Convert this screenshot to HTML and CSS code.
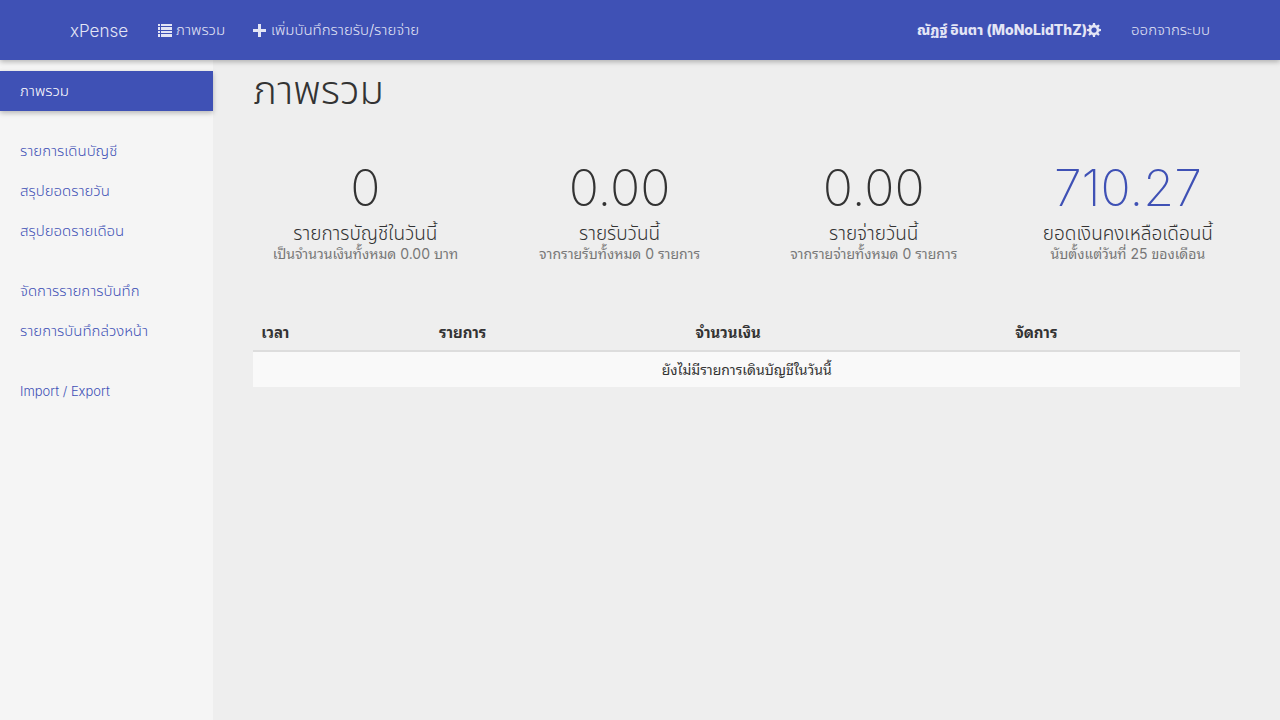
FILE: index.html
```html
<!DOCTYPE html>
<html lang="th">
<head>
<meta charset="utf-8">
<title>xPense</title>
<link rel="stylesheet" href="styles.css">
</head>
<body>
<header class="navbar">
  <a class="brand" href="#">xPense</a>
  <nav class="nav-main">
    <a href="#"><svg class="icon" viewBox="0 0 14 14" aria-hidden="true"><path d="M0 1h2v2H0zM3 1h11v2H3zM0 4h2v3H0zM3 4h11v3H3zM0 8h2v2H0zM3 8h11v2H3zM0 11h2v3H0zM3 11h11v3H3z"/></svg>ภาพรวม</a>
    <a href="#"><svg class="icon" viewBox="0 0 14 14" aria-hidden="true"><path d="M5 1h3v5h5v3H8v5H5V9H0V6h5z"/></svg>เพิ่มบันทึกรายรับ/รายจ่าย</a>
  </nav>
  <nav class="nav-user">
    <a class="user" href="#">ณัฏฐ์ อินตา (MoNoLidThZ)<svg class="icon gear" viewBox="0 0 14 14" aria-hidden="true"><path fill-rule="evenodd" d="M6 0h2l.4 2 1.3.6L11.400 1.400l1.400 1.400L11.500 4.400 12 5.800l2 .3v2l-2 .3-.6 1.400 1.300 1.600-1.400 1.400-1.700-1.200-1.300.5L8 14H6l-.4-2-1.300-.5-1.700 1.200-1.400-1.400 1.300-1.600L2 8.400l-2-.3v-2l2-.3.5-1.400L1.200 2.800l1.400-1.400 1.700 1.200L5.600 2zM7 4.400a2.700 2.700 0 1 0 .01 0z"/></svg></a>
    <a href="#">ออกจากระบบ</a>
  </nav>
</header>
<div class="layout">
  <aside class="sidebar">
    <ul><li><a class="active" href="#">ภาพรวม</a></li></ul>
    <ul>
      <li><a href="#">รายการเดินบัญชี</a></li>
      <li><a href="#">สรุปยอดรายวัน</a></li>
      <li><a href="#">สรุปยอดรายเดือน</a></li>
    </ul>
    <ul>
      <li><a href="#">จัดการรายการบันทึก</a></li>
      <li><a href="#">รายการบันทึกล่วงหน้า</a></li>
    </ul>
    <ul><li><a class="latin" href="#">Import / Export</a></li></ul>
  </aside>
  <main class="content">
    <h1>ภาพรวม</h1>
    <section class="stats">
      <div class="stat"><div class="value">0</div><h2>รายการบัญชีในวันนี้</h2><p>เป็นจำนวนเงินทั้งหมด 0.00 บาท</p></div>
      <div class="stat"><div class="value">0.00</div><h2>รายรับวันนี้</h2><p>จากรายรับทั้งหมด 0 รายการ</p></div>
      <div class="stat"><div class="value">0.00</div><h2>รายจ่ายวันนี้</h2><p>จากรายจ่ายทั้งหมด 0 รายการ</p></div>
      <div class="stat"><div class="value balance">710.27</div><h2>ยอดเงินคงเหลือเดือนนี้</h2><p>นับตั้งแต่วันที่ 25 ของเดือน</p></div>
    </section>
    <table class="entries">
      <thead><tr><th class="time">เวลา</th><th class="item">รายการ</th><th class="amount">จำนวนเงิน</th><th>จัดการ</th></tr></thead>
      <tbody><tr><td colspan="4">ยังไม่มีรายการเดินบัญชีในวันนี้</td></tr></tbody>
    </table>
  </main>
</div>
</body>
</html>
```
FILE: styles.css
```css
* { box-sizing: border-box; }
body {
  margin: 0;
  min-height: 100vh;
  display: flex;
  flex-direction: column;
  background: #eee;
  color: #333;
  font: 300 15px/20px Inter, "Noto Sans", "Noto Sans Thai", sans-serif;
}
a { color: #3f51b5; text-decoration: none; }
h1, h2, p, ul { margin: 0; padding: 0; font-weight: 300; }
ul { list-style: none; }
.navbar {
  position: relative;
  display: flex;
  align-items: center;
  height: 60px;
  padding: 0 70px;
  background: #3f51b5;
  box-shadow: 0 2px 5px rgba(0, 0, 0, .26);
}
.navbar a { color: #e3e5f5; white-space: nowrap; }
.navbar .brand { font-size: 17px; margin-right: 30px; padding-top: 2px; }
.nav-main, .nav-user { display: flex; gap: 28px; }
.nav-user { margin-left: auto; gap: 30px; }
.navbar .user { font-size: 14px; font-weight: 800; }
.icon { width: 14px; height: 14px; margin-right: 4px; fill: currentColor; vertical-align: -2px; }
.gear { margin-right: 0; }
.layout { flex: 1; display: flex; }
.sidebar { width: 16.6667%; flex: none; padding-top: 11px; background: #f5f5f5; }
.sidebar ul { margin-bottom: 20px; }
.sidebar a { display: block; height: 40px; padding: 10px 20px; white-space: nowrap; }
.sidebar .active { background: #3f51b5; color: #fff; box-shadow: 0 2px 5px rgba(0, 0, 0, .26); }
.sidebar .latin { font-size: 13px; }
.content { flex: 1; min-width: 0; padding: 10px 40px; }
h1 { font-size: 40px; line-height: 40px; }
.stats { display: grid; grid-template-columns: repeat(4, 1fr); gap: 30px; margin-top: 50px; text-align: center; }
.value { font-size: 50px; font-weight: 200; line-height: 56px; }
.balance { color: #3f51b5; }
h2 { font-size: 19px; line-height: 20px; margin-top: 8px; white-space: nowrap; }
.stat p { font-size: 14px; font-weight: 400; color: #777; white-space: nowrap; font-family: Inter, "Noto Sans Thai Looped", Loma, "Noto Sans Thai", sans-serif; }
.entries { width: 100%; margin-top: 50px; border-collapse: collapse; table-layout: fixed; font-family: "Noto Sans Thai Looped", Loma, Inter, "Noto Sans Thai", sans-serif; }
.entries th { padding: 7px 8px 9px; text-align: left; font-weight: 700; border-bottom: 2px solid #ddd; }
.entries td { padding: 7px 8px 8px; text-align: center; font-size: 14px; font-weight: 400; background: #f9f9f9; }
.time { width: 18%; }
.item { width: 26%; }
.amount { width: 32.4%; }
```
